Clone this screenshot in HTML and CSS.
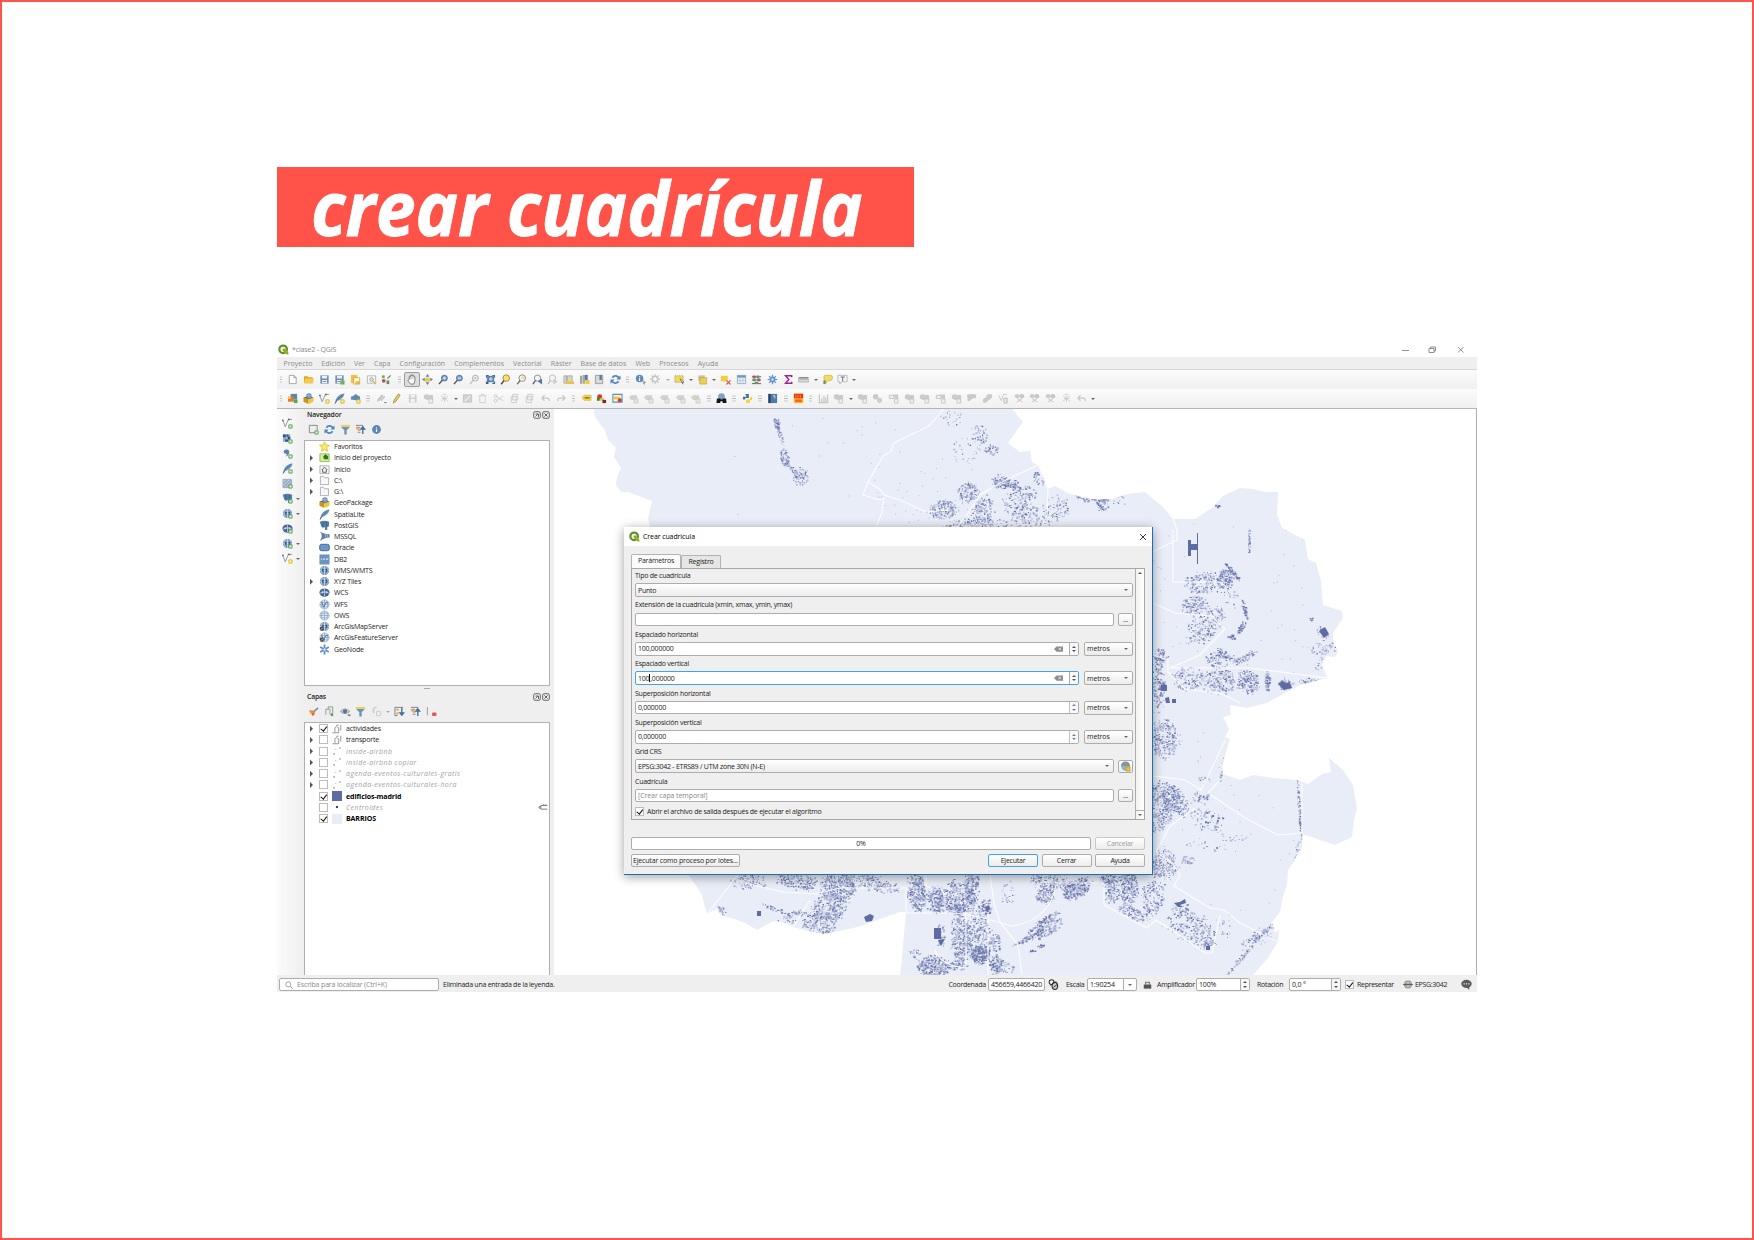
FILE: index.html
```html
<!DOCTYPE html>
<html lang="es">
<head>
<meta charset="utf-8">
<title>crear cuadrícula</title>
<link rel="stylesheet" href="styles.css">
</head>
<body>
<svg class="defs" aria-hidden="true"><defs>
<symbol id="qgis" viewBox="0 0 12 12"><circle cx="5.6" cy="5.8" r="4.1" fill="none" stroke="#589632" stroke-width="2.5"/><path d="M5.5 5.5h2.4L11.4 9.6v1.8H9.5L5.5 7.8z" fill="#93b023"/><path d="M5 5h2.6v1H6v1.6H5z" fill="#ee7913"/></symbol>
<symbol id="new" viewBox="0 0 12 12"><path d="M2.5 1.5h5l2.5 2.5v6.5h-7.5zM7.5 1.5V4H10" fill="#fff" stroke="#8a8a8a" stroke-width=".8"/></symbol>
<symbol id="open" viewBox="0 0 12 12"><path d="M1 2.5h4l1 1h4.5v6.500H1z" fill="#e0a32c"/><path d="M1 10l1.500-5H12l-1.200 5z" fill="#f6ca51"/></symbol>
<symbol id="save" viewBox="0 0 12 12"><path d="M1.500 1.500h9v9h-9z" fill="#6d8cad"/><path d="M3.200 1.800h5.600v3H3.200zM3.200 6.500h5.600v3.500H3.200z" fill="#eef1f4"/><path d="M4 8.200h4" stroke="#7b8896"/></symbol>
<symbol id="saveas" viewBox="0 0 12 12"><use href="#save"/><path d="M7 7h4.500v4.500H7z" fill="#6fae6d"/></symbol>
<symbol id="layout" viewBox="0 0 12 12"><path d="M1 1h7v9H1z" fill="#f0c33c"/><path d="M4 4h6.500v7H4z" fill="#fff8dc" stroke="#b89a4a" stroke-width=".7"/><path d="M6 8h5v3H6z" fill="#f3b62b"/></symbol>
<symbol id="layoutm" viewBox="0 0 12 12"><path d="M1.500 2h9v8h-9z" fill="#fafafa" stroke="#a5a5a5" stroke-width=".8"/><circle cx="6" cy="6" r="2" fill="#d6e3ef" stroke="#888" stroke-width=".7"/><path d="M7.500 7.500l3.500 3.500" stroke="#e7b53a" stroke-width="1.300"/></symbol>
<symbol id="style" viewBox="0 0 12 12"><path d="M1 1.500h3v3H1z" fill="#76a95b"/><path d="M6.500 4.500L10 1l1 1-3.500 3.500z" fill="#777"/><circle cx="3" cy="7.500" r="2" fill="#c0504d"/><path d="M6 7h3v4H6z" fill="#68915b"/></symbol>
<symbol id="pan" viewBox="0 0 12 12"><path d="M3.500 6V3h1.300V1.500h1.300V1h1.300v1h1.300v1.200h1v4.300L8.500 11H5L2 7.500l.5-1z" fill="#fff" stroke="#555" stroke-width=".8"/><path d="M4.800 3v3M6.200 2v4M7.500 2.500V6" stroke="#888" stroke-width=".5"/></symbol>
<symbol id="pansel" viewBox="0 0 12 12"><path d="M3.500 4h5v4.500h-5z" fill="#f5c93d"/><path d="M6 0l2 3H4zM6 12L4 9h4zM0 6l3-2v4zM12 6L9 8V4z" fill="#5a7fa8"/></symbol>
<symbol id="zin" viewBox="0 0 12 12"><circle cx="7" cy="4.500" r="3.200" fill="#78a2cf" stroke="#53749a" stroke-width="1"/><path d="M4.700 6.800L1 11" stroke="#555" stroke-width="1.500"/><path d="M5.300 4.500h3.400M7 2.900v3.200" stroke="#fff" stroke-width=".8"/></symbol>
<symbol id="zout" viewBox="0 0 12 12"><circle cx="7" cy="4.500" r="3.200" fill="#78a2cf" stroke="#53749a" stroke-width="1"/><path d="M4.700 6.800L1 11" stroke="#555" stroke-width="1.500"/><path d="M5.300 4.500h3.400" stroke="#fff" stroke-width=".9"/></symbol>
<symbol id="znat" viewBox="0 0 12 12"><circle cx="7" cy="4.500" r="3.200" fill="#eee" stroke="#aaa" stroke-width="1"/><path d="M4.700 6.800L1 11" stroke="#bbb" stroke-width="1.300"/><path d="M6 3.500h2v2H6z" fill="#bbb"/></symbol>
<symbol id="zfull" viewBox="0 0 12 12"><path d="M1 1h3.500L1 4.500zM11 1v3.500L7.500 1zM1 11V7.500L4.500 11zM11 11H7.500L11 7.500z" fill="#3f6c9c"/><path d="M2 2h8v7H2z" fill="#5c8abd"/><circle cx="6.300" cy="5.500" r="2.500" fill="#b4cde6" stroke="#557" stroke-width=".6"/><path d="M4 8l-2.500 3" stroke="#444"/></symbol>
<symbol id="zsel" viewBox="0 0 12 12"><circle cx="6.800" cy="4.500" r="3.600" fill="#f7df77" stroke="#a08a3a" stroke-width="1"/><path d="M4.300 7.200L1.300 11.200" stroke="#444" stroke-width="1.500"/></symbol>
<symbol id="zlay" viewBox="0 0 12 12"><circle cx="6.800" cy="4.500" r="3.600" fill="#f2f2ea" stroke="#888" stroke-width="1"/><path d="M4.300 7.200L1.300 11.200" stroke="#555" stroke-width="1.300"/><path d="M6 3h3v2H6z" fill="#f3d266"/></symbol>
<symbol id="zlast" viewBox="0 0 12 12"><circle cx="6" cy="4.500" r="3.400" fill="#f5f5f5" stroke="#888"/><path d="M3.800 7L1 11" stroke="#555" stroke-width="1.300"/><path d="M11 5v6.500L6.500 8.300z" fill="#4b7bb0"/></symbol>
<symbol id="znext" viewBox="0 0 12 12"><circle cx="6" cy="4.500" r="3.400" fill="#f5f5f5" stroke="#bbb"/><path d="M3.800 7L1 11" stroke="#bbb" stroke-width="1.300"/><path d="M7 5v6.500l4.500-3.300z" fill="#ccc"/></symbol>
<symbol id="mapa" viewBox="0 0 12 12"><path d="M1 2h3v8H1zM4.500 2H10v8H4.500z" fill="#d9d6c9" stroke="#8e8b7a" stroke-width=".6"/><path d="M3 8h9v3H3z" fill="#edc241"/></symbol>
<symbol id="book" viewBox="0 0 12 12"><path d="M1 2h2.500v8.500H1zM4 1h2.500v9.500H4z" fill="#a8a79f"/><path d="M6.500 1h3v6h-3z" fill="#4d7eb4"/><path d="M7 6.500h4.500V11H7z" fill="#f2c743"/></symbol>
<symbol id="book2" viewBox="0 0 12 12"><path d="M1.500 1.500h8v9h-8z" fill="#dcdad0" stroke="#8b8b88" stroke-width=".8"/><path d="M6 1h2.500v5.500H6z" fill="#4d7eb4"/></symbol>
<symbol id="refresh" viewBox="0 0 12 12"><path d="M10 5A4.200 4.200 0 0 0 2.500 4M2 7a4.200 4.200 0 0 0 7.500 1" fill="none" stroke="#4d86c0" stroke-width="1.900"/><path d="M11.500 1.500V6H7zM.5 10.500V6H5z" fill="#4d86c0"/></symbol>
<symbol id="ident" viewBox="0 0 12 12"><circle cx="5" cy="5" r="4.100" fill="#5e8fc4"/><path d="M5 4.500v3M5 2.500v1" stroke="#fff" stroke-width="1.200"/><path d="M7 6l4.500 3-2 .3.800 2z" fill="#fff" stroke="#444" stroke-width=".5"/></symbol>
<symbol id="gear" viewBox="0 0 12 12"><circle cx="5.500" cy="5.500" r="3" fill="none" stroke="#c5c5c5" stroke-width="1.600"/><path d="M5.500 0v2.500M5.500 8.500V11M0 5.500h2.500M8.500 5.500H11M1.600 1.600l1.800 1.800M7.600 7.600l1.800 1.800M9.400 1.600L7.600 3.400M3.400 7.600L1.600 9.400" stroke="#c9c9c9" stroke-width="1.300"/></symbol>
<symbol id="select" viewBox="0 0 12 12"><path d="M1 2h9v7H1z" fill="#f7dc52" stroke="#777" stroke-width=".7" stroke-dasharray="1.300 .8"/><path d="M6.500 5l4.500 4-2 .1.700 2z" fill="#fff" stroke="#444" stroke-width=".6"/></symbol>
<symbol id="selval" viewBox="0 0 12 12"><path d="M1.500 1.500h7v6h-7z" fill="#c7c49f"/><path d="M3 4h7.500v7H3z" fill="#efcf4b" stroke="#a0956a" stroke-width=".6"/></symbol>
<symbol id="desel" viewBox="0 0 12 12"><path d="M1 2h7.500v6H1z" fill="#f3cf3e"/><path d="M7 7h4.500v4.500H7z" fill="#fff"/><path d="M7 7l4.500 4.500M11.500 7L7 11.500" stroke="#d65353" stroke-width="1.300"/></symbol>
<symbol id="table" viewBox="0 0 12 12"><path d="M1.500 1.500h9v9h-9z" fill="#eaf0f6" stroke="#7f9cba" stroke-width=".8"/><path d="M1.500 1.500h9v2.500h-9z" fill="#6f98c4"/><path d="M4.500 4v6.500M7.500 4v6.500M1.500 7h9" stroke="#9cb3ca" stroke-width=".6"/></symbol>
<symbol id="abac" viewBox="0 0 12 12"><path d="M1 3h10M1 6.500h10M1 10.500h10" stroke="#555"/><path d="M2 1.500h3v3H2zM7 5h3v3H7z" fill="#c0504d"/><path d="M6 1.500h3v3H6zM2 5h3v3H2zM4 8.500h4v2H4z" fill="#5d9b76"/></symbol>
<symbol id="cog" viewBox="0 0 12 12"><circle cx="6" cy="6" r="3.200" fill="#5d94cf"/><path d="M6 .8v10.400M.8 6h10.400M2.300 2.300l7.400 7.400M9.700 2.300L2.300 9.700" stroke="#5d94cf" stroke-width="1.300"/><circle cx="6" cy="6" r="1.300" fill="#dbe7f4"/></symbol>
<symbol id="sum" viewBox="0 0 12 12"><path d="M9.500 3.500V1.800H2.800L6.300 6l-3.500 4.200h6.700V8.500" fill="none" stroke="#9b2393" stroke-width="1.600"/></symbol>
<symbol id="ruler" viewBox="0 0 12 12"><path d="M.5 3.500h11v1.500H.5z" fill="#777"/><path d="M.5 6h11v2.800H.5z" fill="#d8d8d8" stroke="#999" stroke-width=".6"/></symbol>
<symbol id="tip" viewBox="0 0 12 12"><path d="M3.500 1.500h6q2 0 2 2.500t-2 3H7L4 10V7Q2 7 2 4t1.500-2.500z" fill="#f5db67" stroke="#c9a93c" stroke-width=".7"/><path d="M1.500 7h2.500V11H1.500z" fill="#6b9550"/></symbol>
<symbol id="text" viewBox="0 0 12 12"><path d="M1 1.500h10v7H5L3 11V8.500H1z" fill="#f4f4f4" stroke="#aaa" stroke-width=".8"/><path d="M4 3.300h4.500M6.200 3.300V8" stroke="#667" stroke-width="1"/></symbol>
<symbol id="dsm" viewBox="0 0 12 12"><path d="M4 1h7v6H4z" fill="#5983b1"/><path d="M1 4h6.500v5.500H1z" fill="#d77e3c"/><path d="M1 3.500h3v3H1z" fill="#f5c843"/><path d="M7.500 7h4v4h-4z" fill="#5ca45a"/></symbol>
<symbol id="gpkg" viewBox="0 0 12 12"><path d="M.5 5l5.500 2v5L.5 9.500z" fill="#c9961a"/><path d="M11.500 5L6 7v5l5.500-2.500z" fill="#f3c63a"/><path d="M.5 5L6 3l5.500 2L6 7z" fill="#7d6a30"/><circle cx="6.500" cy="3.300" r="2.900" fill="#5f8dbd"/><path d="M4 3h5M6.500.8v5" stroke="#bfd5ec" stroke-width=".6"/></symbol>
<symbol id="vec" viewBox="0 0 12 12"><path d="M.8 2.500L3.500 9.500 7 1.500H11" fill="none" stroke="#7b8a9c" stroke-width=".9"/><circle cx="1" cy="2.500" r="1" fill="#667"/><circle cx="7.500" cy="1.500" r="1" fill="#667"/></symbol>
<symbol id="vecg" viewBox="0 0 12 12"><use href="#vec"/><path d="M7.500 7.500h3.500V11H7.500z" fill="#dfeedd" stroke="#56a052"/></symbol>
<symbol id="vecy" viewBox="0 0 12 12"><use href="#vec"/><path d="M7.500 7.500h3.500V11H7.500z" fill="#fff3ae" stroke="#ddb321"/></symbol>
<symbol id="vecd" viewBox="0 0 12 12"><path d="M.8 2.500L3.500 8.500 6 1.500H10" fill="none" stroke="#c4c4c4" stroke-width=".9"/><path d="M6.500 5.500h3.500V11H6.500z" fill="#e8e8e4" stroke="#bbb"/></symbol>
<symbol id="feather" viewBox="0 0 12 12"><path d="M1 11.500C1.500 6 5 1 11.500.5 11 4.500 7 8 3.500 8.500L1.800 11.500z" fill="#6e94bd"/><path d="M1 11.500Q4 5 9 2.500" stroke="#3e5e82" stroke-width=".7" fill="none"/></symbol>
<symbol id="feathg" viewBox="0 0 12 12"><use href="#feather"/><path d="M7.500 7.500h3.500V11H7.500z" fill="#dfeedd" stroke="#56a052"/></symbol>
<symbol id="feathy" viewBox="0 0 12 12"><use href="#feather"/><path d="M7.500 7.500h3.500V11H7.500z" fill="#fff3ae" stroke="#ddb321"/></symbol>
<symbol id="virt" viewBox="0 0 12 12"><path d="M1 4l3-1 2-2 3 2 2 1v4H6L1 7z" fill="#5f88b5"/><path d="M7.500 7.500h3.500V11H7.500z" fill="#fff3ae" stroke="#ddb321"/></symbol>
<symbol id="rast" viewBox="0 0 12 12"><path d="M1 1.500h8v8H1z" fill="#8eafd3"/><path d="M1 1.500h3v3H1zM6.500 4h2.500v3H6.500zM3.500 7h3v2.500h-3zM5 1.500h2V4H5z" fill="#2d527d"/><path d="M7.500 7.500h3.500V11H7.500z" fill="#dfeedd" stroke="#56a052"/></symbol>
<symbol id="comma" viewBox="0 0 12 12"><path d="M2 5.500A3 3 0 1 1 8 4C8 7 6 8.500 4 9.500 5.500 7.500 5 7 5 6.500z" fill="#5a82b0"/><path d="M7.500 7.500h3.500V11H7.500z" fill="#dfeedd" stroke="#56a052"/></symbol>
<symbol id="mesh" viewBox="0 0 12 12"><path d="M1 1.500h9.500v9H1z" fill="#b9c9da" stroke="#8299b1" stroke-width=".7"/><path d="M2 9.500L9.500 2.500M2 6l4-4M5 10l5-5" stroke="#637f9e" stroke-width=".8"/><path d="M7.500 7.500h3.500V11H7.500z" fill="#dfeedd" stroke="#56a052"/></symbol>
<symbol id="eleph" viewBox="0 0 12 12"><path d="M.8 2Q6-.5 11 2v4.500L9 8v3H6.500V8L4 8.500 2.500 7z" fill="#557da8"/><path d="M4.500 2v5M8 2.500v4" stroke="#2f5379" stroke-width=".7"/></symbol>
<symbol id="elephg" viewBox="0 0 12 12"><use href="#eleph"/><path d="M7.500 7.500h3.500V11H7.500z" fill="#dfeedd" stroke="#56a052"/></symbol>
<symbol id="globe" viewBox="0 0 12 12"><circle cx="6" cy="6" r="5" fill="#6f93ba"/><path d="M3.500 2.500Q1.500 6 3.500 9.500M6 1v10M8.500 2.500q2 3.500 0 7M1 6h10M2 3.500h8" stroke="#cfdeed" stroke-width=".8" fill="none"/><path d="M3 3.500l2.500 1L4.500 8 3 6.500zM7 4l2-.5.500 3.500-2 1z" fill="#3c5e86"/></symbol>
<symbol id="globeg" viewBox="0 0 12 12"><use href="#globe"/><path d="M7.500 7.500h3.500V11H7.500z" fill="#dfeedd" stroke="#56a052"/></symbol>
<symbol id="dglobe" viewBox="0 0 12 12"><ellipse cx="6" cy="6" rx="5.500" ry="4.500" fill="#43658e"/><path d="M1 7q5-3.500 10 0M6 2v8" stroke="#c5d5e6" fill="none" stroke-width=".9"/><circle cx="3.700" cy="5.800" r="1.200" fill="#c8d8e9"/><circle cx="8.300" cy="5.800" r="1.200" fill="#c8d8e9"/></symbol>
<symbol id="dglobeg" viewBox="0 0 12 12"><use href="#dglobe"/><path d="M7.500 7.500h3.500V11H7.500z" fill="#dfeedd" stroke="#56a052"/></symbol>
<symbol id="lglobe" viewBox="0 0 12 12"><circle cx="6" cy="6" r="5" fill="#e6eef6" stroke="#8aa9ca" stroke-width=".8"/><path d="M3.500 2.500Q1.500 6 3.500 9.500M6 1v10M8.500 2.500q2 3.500 0 7M1 6h10M2 3.500h8M2 8.500h8" stroke="#7c9dc1" stroke-width=".7" fill="none"/></symbol>
<symbol id="wfs" viewBox="0 0 12 12"><use href="#lglobe"/><path d="M3 3l2 6 2.500-5H10" fill="none" stroke="#51708f"/></symbol>
<symbol id="ags" viewBox="0 0 12 12"><use href="#globe"/><circle cx="3" cy="8.500" r="2.300" fill="#444"/><path d="M2 9.500l2-2" stroke="#fff" stroke-width=".8"/></symbol>
<symbol id="agsf" viewBox="0 0 12 12"><use href="#wfs"/><circle cx="3" cy="8.500" r="2.300" fill="#444"/><path d="M2 9.500l2-2" stroke="#fff" stroke-width=".8"/></symbol>
<symbol id="pen" viewBox="0 0 12 12"><path d="M2.500 11L3.500 7.500 8 1l2 1.300L5.500 9z" fill="#f0cf44" stroke="#8a7a32" stroke-width=".7"/></symbol>
<symbol id="peng" viewBox="0 0 12 12"><path d="M1 9.500L2 6.500 6.500 1.500l1.800 1.500L4 8.500zM5 8L9 3l1 1-4 5z" fill="#c4c2be"/><path d="M9 10.500h2.500" stroke="#666"/></symbol>
<symbol id="saveg" viewBox="0 0 12 12"><path d="M2 1.500h8.500v9H2z" fill="#d0d0d0"/><path d="M4 2h4.500v2.800H4zM4 6.500h4.500v3.500H4z" fill="#f4f4f4"/></symbol>
<symbol id="polyg" viewBox="0 0 12 12"><path d="M1 2.500Q4 0 7 2.500q3-1.500 4 .5v4L7 6.500 5 8 1 6z" fill="#cbcbc8"/><path d="M6.500 6.500h4V11h-4z" fill="#efeee9" stroke="#c2bdb0" stroke-width=".8"/></symbol>
<symbol id="polyh" viewBox="0 0 12 12"><path d="M1.500 2.500h5v3.500h-5z" fill="#f0f0ee" stroke="#c4c4c0"/><path d="M5 1.500h6v5H8z" fill="#cbcbc8"/><path d="M7 6.500h4V11H7z" fill="#efeee9" stroke="#c9bfa8" stroke-width=".8"/></symbol>
<symbol id="blobs" viewBox="0 0 12 12"><circle cx="4" cy="4" r="3" fill="#cacac7"/><circle cx="8.200" cy="8" r="2.800" fill="#cfceca"/></symbol>
<symbol id="blob2" viewBox="0 0 12 12"><ellipse cx="3.500" cy="3.500" rx="2.700" ry="2.300" fill="#cdcdca"/><ellipse cx="8.500" cy="3.500" rx="2.700" ry="2.300" fill="#c6c6c3"/><path d="M3 10l6-4M9 10L3.500 6" stroke="#cbb9b9" stroke-width="1"/></symbol>
<symbol id="bean" viewBox="0 0 12 12"><path d="M1 9Q.5 6.500 4 5q1-4 4.500-4T11 4Q10.500 7 7 8 5 11 3 11T1 9z" fill="#cbcbc8"/></symbol>
<symbol id="flag" viewBox="0 0 12 12"><path d="M1 2q5-2 10 0v3.500Q6 5.500 4.500 8.500L2 9z" fill="#c9c9c6"/></symbol>
<symbol id="starg" viewBox="0 0 12 12"><path d="M6 3v7M2 3l8 6M10 3L2 9M3 6h6M4 1.500l4 0" stroke="#cfcfcf" stroke-width="1"/></symbol>
<symbol id="noteg" viewBox="0 0 12 12"><path d="M1.500 2h9v8h-9z" fill="#d4d4cf" stroke="#bcbcb8" stroke-width=".8"/><path d="M3 9l6-6" stroke="#fff"/></symbol>
<symbol id="trash" viewBox="0 0 12 12"><path d="M1.500 3h9M4.500 3V1.500h3V3M3 3v7.500h6V3" fill="none" stroke="#cfcfcf"/></symbol>
<symbol id="cut" viewBox="0 0 12 12"><path d="M11 3.500L4 8M11 8.500L4 4" stroke="#ccc"/><circle cx="2.700" cy="3.500" r="1.500" fill="none" stroke="#ccc"/><circle cx="2.700" cy="8.500" r="1.500" fill="none" stroke="#ccc"/></symbol>
<symbol id="copy" viewBox="0 0 12 12"><path d="M4 1.500h5.500v6H4zM2.500 4H8v6.500H2.500z" fill="#f3f3f3" stroke="#ccc"/></symbol>
<symbol id="undo" viewBox="0 0 12 12"><path d="M2 5.500h6q2.500 0 2 3.500M5 2.500L2 5.500l3 3" fill="none" stroke="#c8c8c8" stroke-width="1.300"/></symbol>
<symbol id="redo" viewBox="0 0 12 12"><path d="M10 5.500H4q-2.500 0-2 3.500M7 2.500l3 3-3 3" fill="none" stroke="#c8c8c8" stroke-width="1.300"/></symbol>
<symbol id="label" viewBox="0 0 12 12"><path d="M1 5l2.500-2.500H11v5.500H3.500z" fill="#f7d83f" stroke="#c6a52c" stroke-width=".6"/><path d="M4 5.300h5.500" stroke="#554" stroke-width="1.200"/></symbol>
<symbol id="labc" viewBox="0 0 12 12"><circle cx="4" cy="4" r="2.700" fill="#d33"/><path d="M1 5h3v3.500H1z" fill="#2c8b3c"/><path d="M4.500 5.500h4v3h-4z" fill="#e9bf2b"/><path d="M7 7.500h4v3.500H7z" fill="#7c2b2b"/></symbol>
<symbol id="labb" viewBox="0 0 12 12"><path d="M1 1.500h10v8.500H1z" fill="#fff5cc" stroke="#4f8fd6" stroke-width="1.200"/><path d="M2 4h7v3H2z" fill="#efc93a"/><circle cx="8.500" cy="8" r="2.200" fill="#cf3a3a"/></symbol>
<symbol id="labg" viewBox="0 0 12 12"><path d="M1 4.500l2.500-2H10v5H3.500z" fill="#d2d1cb"/><path d="M6.500 6.500H11V11H6.500z" fill="#e6e5e1" stroke="#c4c2bc" stroke-width=".7"/></symbol>
<symbol id="bino" viewBox="0 0 12 12"><circle cx="6" cy="4" r="3.700" fill="#7fa3c9"/><path d="M1 6h4v1h2V6h4l.5 5H7.500L7 9H5l-.5 2H.5z" fill="#151515"/></symbol>
<symbol id="py" viewBox="0 0 12 12"><path d="M3.500 1h4v4.500H4L3 7H1V4h4" fill="#3d75a8"/><path d="M8.500 11h-4V7h4l1-3H11v4H8.500z" fill="#f8cf3c"/></symbol>
<symbol id="bookb" viewBox="0 0 12 12"><path d="M1.500 1h9.500v10H1.500z" fill="#4d7cab"/><path d="M1.500 1H4v10H1.500z" fill="#27425f"/><path d="M6.500 3h2v3" fill="none" stroke="#dce8f4"/></symbol>
<symbol id="osm" viewBox="0 0 12 12"><path d="M.8.800h10.400v10.400H.8z" fill="#ffc726"/><path d="M1 .8h10v5H1z" fill="#ef2f1c"/><path d="M3 2v3M5.500 2v3M8 2v3" stroke="#ffc21e" stroke-width=".8"/><path d="M2 7h8v3H2z" fill="#f4672a"/></symbol>
<symbol id="histo" viewBox="0 0 12 12"><path d="M1.500 1.500v9h9v-9M4 10V6M6.500 10V3M8.500 10V5" fill="none" stroke="#c6c6c2" stroke-width="1.300"/></symbol>
<symbol id="addl" viewBox="0 0 12 12"><path d="M8 9.500H1.500v-8H10V7" fill="none" stroke="#777" stroke-width=".9"/><path d="M7.500 7.500h3.500V11H7.500z" fill="#dfeedd" stroke="#56a052"/></symbol>
<symbol id="filter" viewBox="0 0 12 12"><path d="M1 3h10L7.300 6.800V11.500H4.700V6.800z" fill="#6c93bf"/><path d="M1 1h10v1.800H1z" fill="#f1cf41"/></symbol>
<symbol id="coll" viewBox="0 0 12 12"><path d="M1 1.500h8M1.500 4h4M3 6.500h3M3 9h3" stroke="#7b7b7b"/><path d="M1.500 3h2.500v3H1.500z" fill="#f09a39"/><path d="M8.500 11V5M6.500 5.500L8.500 3l2 2.500z" stroke="#446f9e" stroke-width="1.500" fill="#446f9e"/></symbol>
<symbol id="expa" viewBox="0 0 12 12"><path d="M1 1.500h9M1 1.500v9h3" stroke="#7b7b7b" fill="none"/><path d="M2.500 3h2.500v2H2.500zM2.500 7h2.500v2H2.500z" fill="#f09a39"/><path d="M8.500 2v6M6.500 7.500L8.500 10l2-2.500z" stroke="#446f9e" stroke-width="1.500" fill="#446f9e"/></symbol>
<symbol id="info" viewBox="0 0 12 12"><circle cx="6" cy="6" r="4.800" fill="#5b87b8"/><path d="M6 5.300v3.400M6 3.200v1" stroke="#fff" stroke-width="1.300"/></symbol>
<symbol id="star" viewBox="0 0 12 12"><path d="M6 .8l1.600 3.500 3.800.4-2.900 2.600.9 3.900L6 9.200l-3.400 2 .9-3.900L.6 4.700l3.800-.4z" fill="#fbe867" stroke="#d3b62c" stroke-width=".8"/></symbol>
<symbol id="homep" viewBox="0 0 12 12"><path d="M1 2h10v8.500H1z" fill="#d7f09b" stroke="#86a832" stroke-width=".8"/><path d="M4.500 5L7 2.500l3 2V8H5.500z" fill="#267a23"/></symbol>
<symbol id="home" viewBox="0 0 12 12"><path d="M1 2h10v8.500H1z" fill="#f5f5f5" stroke="#999" stroke-width=".8"/><path d="M3 6.500L6 3.500l3 3M4 6v3h4V6" fill="none" stroke="#444" stroke-width=".9"/></symbol>
<symbol id="folder" viewBox="0 0 12 12"><path d="M1.500 10.500v-9H5l1 1.500h4.500v7.500z" fill="#f7f7f7" stroke="#999" stroke-width=".8"/></symbol>
<symbol id="mssql" viewBox="0 0 12 12"><path d="M1 .5Q4 3 11.500 3.500V7Q6 7 1 11q2-3 2-5.500T1 .5z" fill="#5b7fa8"/><path d="M7 3v4M9 3.500V7" stroke="#dbe5f0" stroke-width=".6"/></symbol>
<symbol id="orac" viewBox="0 0 12 12"><rect x=".8" y="2.500" width="10.400" height="7" rx="2" fill="#6d96c4" stroke="#3c6494"/></symbol>
<symbol id="db2" viewBox="0 0 12 12"><path d="M.5.500h11v11H.5z" fill="#6a93c0"/><path d="M2 5.500h1.500M4.500 5.500h2M7.500 5.500H10" stroke="#dce8f4" stroke-width="1.300"/></symbol>
<symbol id="snow" viewBox="0 0 12 12"><path d="M6 .5v11M1.300 3.300l9.400 5.400M10.700 3.300L1.300 8.700" stroke="#5f8dc0" stroke-width="2"/><circle cx="6" cy="6" r="1.300" fill="#dce8f4"/></symbol>
<symbol id="brush" viewBox="0 0 12 12"><path d="M11 2L6 6.500" stroke="#7b91a8" stroke-width="1.800"/><path d="M1 4.500L5.500 5 8 8 5 10.500z" fill="#e8833a"/><path d="M1 5l3 3-1 2z" fill="#f3c33e"/><path d="M5 8l2 1-2 2z" fill="#d6453f"/></symbol>
<symbol id="addgrp" viewBox="0 0 12 12"><path d="M2 9.500V3.500h4.500v6M4.500 3V1h5v7" fill="none" stroke="#888" stroke-width=".9"/><path d="M7.500 8h2.500v3H7.500z" fill="#56a052"/></symbol>
<symbol id="eye" viewBox="0 0 12 12"><path d="M.5 6Q5.500.5 10.500 6 5.500 10.500.5 6z" fill="#ddd" stroke="#777" stroke-width=".8"/><circle cx="5.500" cy="5.800" r="2.300" fill="#4d79a8"/><path d="M8.500 9h3v2h-3z" fill="#888"/></symbol>
<symbol id="eps" viewBox="0 0 12 12"><path d="M6 1.500Q1.500 1.500 3 5 1 6 3.500 7.500" fill="none" stroke="#c8c8c8" stroke-width="1.500"/><path d="M6 6h4.500v4.500H6z" fill="#eee" stroke="#ccc"/></symbol>
<symbol id="rem" viewBox="0 0 12 12"><path d="M1 1h1v9H1z" fill="#999"/><rect x="6.500" y="7" width="5" height="4" rx="1.500" fill="#e65757"/></symbol>
<symbol id="grp" viewBox="0 0 12 12"><path d="M.5 10.500H8V4M3.500 9.500V4.500L5.500 3 7 4.500M5 1.500h3M10.500 1v7" fill="none" stroke="#777" stroke-width=".9"/></symbol>
<symbol id="pts" viewBox="0 0 12 12"><circle cx="2.500" cy="9.500" r="1" fill="#999"/><circle cx="4.500" cy="4" r=".8" fill="#bbb"/><circle cx="9.500" cy="2.500" r="1" fill="#999"/></symbol>
<symbol id="lupa" viewBox="0 0 12 12"><circle cx="5" cy="5" r="3.800" fill="none" stroke="#777"/><path d="M8 8l3.500 3.500" stroke="#777" stroke-width="1.200"/></symbol>
<symbol id="mouse" viewBox="0 0 12 12"><circle cx="4" cy="3.500" r="2.700" fill="none" stroke="#333" stroke-width="1.200"/><ellipse cx="7.500" cy="7.500" rx="3" ry="3.800" fill="#ccc" stroke="#333" stroke-width="1.200"/><path d="M2 7l7-4M6 9l4-3" stroke="#333"/></symbol>
<symbol id="lock" viewBox="0 0 12 12"><path d="M1 6h10v5.500H1z" fill="#555"/><path d="M3.500 6V3h5V6" fill="none" stroke="#777" stroke-width="1.600"/></symbol>
<symbol id="crs" viewBox="0 0 12 12"><circle cx="6" cy="6" r="4.800" fill="#8e8e8e"/><path d="M2 4h8M2 8h8M6 1v10" stroke="#e5e5e5" stroke-width=".7"/><path d="M0 5.500h12v1H0z" fill="#555"/></symbol>
<symbol id="bubble" viewBox="0 0 12 12"><ellipse cx="6" cy="5.300" rx="5.700" ry="4.600" fill="#5b5b5b"/><path d="M6 9l3 3V7z" fill="#5b5b5b"/><path d="M2.800 5.300h1.300M5.400 5.300h1.300M8 5.300h1.300" stroke="#eee" stroke-width="1.300"/></symbol>
<symbol id="crsy" viewBox="0 0 12 12"><circle cx="6" cy="5.500" r="4.800" fill="#8db4cf"/><path d="M1 5.500h10A5 5 0 0 0 1 5.500z" fill="#8d9499"/><path d="M6.500 6.500H11V11H6.500z" fill="#e9c33a" stroke="#b8962a" stroke-width=".7"/></symbol>
<symbol id="clear" viewBox="0 0 12 8"><path d="M0 4l3.500-3.500H12v7H3.500z" fill="#8c8c8c"/><path d="M6 2.300l3.400 3.400M9.400 2.300L6 5.700" stroke="#fff" stroke-width=".9"/></symbol>
<symbol id="mem" viewBox="0 0 14 10"><path d="M13 3H4v5h9M4 4.500H1.500v2H4M8 3V1M11 3V1" fill="none" stroke="#777" stroke-width="1.300"/></symbol>
<symbol id="float" viewBox="0 0 8 8"><rect x=".7" y=".7" width="6.600" height="6.600" rx="1.500" fill="none" stroke="#666" stroke-width="1"/><path d="M2.500 3l3 0v3M2.500 5.500L5 3" stroke="#666" fill="none"/></symbol>
<symbol id="close" viewBox="0 0 8 8"><rect x=".7" y=".7" width="6.600" height="6.600" rx="1.500" fill="none" stroke="#666" stroke-width="1"/><path d="M2.300 2.300l3.400 3.400M5.700 2.300L2.300 5.700" stroke="#666"/></symbol>
</defs></svg>

<main class="slide">
  <h1 class="banner"><span>crear cuadrícula</span></h1>

  <section class="app">
    <header class="titlebar">
      <svg class="ic"><use href="#qgis"/></svg><span>*clase2 - QGIS</span>
      <svg class="wbtn" viewBox="0 0 62 8"><path d="M0 4.500h7M27 2.500h5v4h-5zM28.500 2.500V1h5v4h-1.500M56 1l5.500 5.500M61.500 1L56 6.500" fill="none" stroke="#777" stroke-width=".8"/></svg>
    </header>
    <nav class="menu"><span>Proyecto</span><span>Edición</span><span>Ver</span><span>Capa</span><span>Configuración</span><span>Complementos</span><span>Vectorial</span><span>Ráster</span><span>Base de datos</span><span>Web</span><span>Procesos</span><span>Ayuda</span></nav>
    <div class="toolbar" data-icons="g8 new open save saveas layout layoutm style g9 pan! pansel zin zout znat zfull zsel zlay zlast znext mapa book book2 refresh g9 ident gear a0 select a selval a desel table abac cog sum ruler a tip text a"></div>
    <div class="toolbar two" data-icons="g8 dsm gpkg vecy feathy virt g10 peng pen saveg polyg starg a noteg trash cut copy copy undo redo g9 label labc labb labg labg labg labg labg g10 bino g10 py g10 bookb g10 osm g9 histo polyg a polyg blobs polyh polyg polyg polyh polyg flag bean vecd blob2 blob2 blob2 starg undo a"></div>

    <div class="work">
      <aside class="side">
        <div class="vtools">
          <div><svg class="ic"><use href="#vecg"/></svg></div>
          <div><svg class="ic"><use href="#rast"/></svg></div>
          <div><svg class="ic"><use href="#comma"/></svg></div>
          <div><svg class="ic"><use href="#feathg"/></svg></div>
          <div><svg class="ic"><use href="#mesh"/></svg></div>
          <div><svg class="ic"><use href="#elephg"/></svg><i class="dn"></i></div>
          <div><svg class="ic"><use href="#globeg"/></svg><i class="dn"></i></div>
          <div><svg class="ic"><use href="#dglobeg"/></svg></div>
          <div><svg class="ic"><use href="#globeg"/></svg><i class="dn"></i></div>
          <div><svg class="ic"><use href="#vecy"/></svg><i class="dn"></i></div>
        </div>
        <div class="panels">
          <div class="phead"><b>Navegador</b><svg><use href="#float"/></svg><svg><use href="#close"/></svg></div>
          <div class="ptools" data-icons="addl refresh filter coll info"></div>
          <ul class="tree nav">
            <li><i></i><svg class="ic"><use href="#star"/></svg>Favoritos</li>
            <li><i class="rt"></i><svg class="ic"><use href="#homep"/></svg>Inicio del proyecto</li>
            <li><i class="rt"></i><svg class="ic"><use href="#home"/></svg>Inicio</li>
            <li><i class="rt"></i><svg class="ic"><use href="#folder"/></svg>C:\</li>
            <li><i class="rt"></i><svg class="ic"><use href="#folder"/></svg>G:\</li>
            <li><i></i><svg class="ic"><use href="#gpkg"/></svg>GeoPackage</li>
            <li><i></i><svg class="ic"><use href="#feather"/></svg>SpatiaLite</li>
            <li><i></i><svg class="ic"><use href="#eleph"/></svg>PostGIS</li>
            <li><i></i><svg class="ic"><use href="#mssql"/></svg>MSSQL</li>
            <li><i></i><svg class="ic"><use href="#orac"/></svg>Oracle</li>
            <li><i></i><svg class="ic"><use href="#db2"/></svg>DB2</li>
            <li><i></i><svg class="ic"><use href="#globe"/></svg>WMS/WMTS</li>
            <li><i class="rt"></i><svg class="ic"><use href="#globe"/></svg>XYZ Tiles</li>
            <li><i></i><svg class="ic"><use href="#dglobe"/></svg>WCS</li>
            <li><i></i><svg class="ic"><use href="#wfs"/></svg>WFS</li>
            <li><i></i><svg class="ic"><use href="#lglobe"/></svg>OWS</li>
            <li><i></i><svg class="ic"><use href="#ags"/></svg>ArcGisMapServer</li>
            <li><i></i><svg class="ic"><use href="#agsf"/></svg>ArcGisFeatureServer</li>
            <li><i></i><svg class="ic"><use href="#snow"/></svg>GeoNode</li>
          </ul>
          <div class="split"></div>
          <div class="phead"><b>Capas</b><svg><use href="#float"/></svg><svg><use href="#close"/></svg></div>
          <div class="ptools" data-icons="brush addgrp eye filter eps a0 expa coll rem"></div>
          <ul class="tree layers">
            <li><i class="rt"></i><em class="cb on"></em><svg class="ic"><use href="#grp"/></svg>actividades</li>
            <li><i class="rt"></i><em class="cb"></em><svg class="ic"><use href="#grp"/></svg>transporte</li>
            <li class="off"><i class="rt"></i><em class="cb"></em><svg class="ic"><use href="#pts"/></svg>inside-airbnb</li>
            <li class="off"><i class="rt"></i><em class="cb"></em><svg class="ic"><use href="#pts"/></svg>inside-airbnb copiar</li>
            <li class="off"><i class="rt"></i><em class="cb"></em><svg class="ic"><use href="#pts"/></svg>agenda-eventos-culturales-gratis</li>
            <li class="off"><i class="rt"></i><em class="cb"></em><svg class="ic"><use href="#pts"/></svg>agenda-eventos-culturales-hora</li>
            <li class="bold"><i></i><em class="cb on"></em><span class="sw dark"></span>edificios-madrid</li>
            <li class="off"><i></i><em class="cb"></em><span class="sw dot"></span>Centroides<svg class="mem"><use href="#mem"/></svg></li>
            <li class="bold"><i></i><em class="cb on"></em><span class="sw pale"></span>BARRIOS</li>
          </ul>
        </div>
      </aside>

      <div class="map">
        <svg id="map" viewBox="554 409 922 566">
          <defs><clipPath id="city"><use href="#outline"/></clipPath></defs>
          <path id="outline" fill="#e9edf7" d="M594 409L595 417 600 424 605 430 608 440 616 448 614 457 621 468 617 477 616 485 621 492 628 492 652 501 648 518 650 527 655 700 688 874 701 893 704 903 707 914 716 909 722 915 737 920 745 923 757 930 766 925 774 921 786 923 793 927 808 931 824 934 858 927 880 919 900 912 906 912 902 957 900 975H1253L1267 959 1278 942 1279 929 1275 933 1272 922 1280 912 1283 896 1287 885 1288 870 1302 848 1303 834 1320 840 1335 845 1352 837 1354 820 1357 809 1353 785 1343 770 1329 758 1331 772 1322 774 1308 784 1297 780 1273 778 1253 775 1240 780 1223 774 1222 766 1230 739 1225 737 1229 729 1223 717 1231 715 1230 705 1247 708 1267 703 1287 692 1300 685 1327 678 1322 664 1326 656 1335 657 1338 652 1333 640 1333 633 1343 618 1342 611 1323 605 1321 581 1316 563 1308 559 1305 540 1282 528 1277 515 1278 492 1264 492 1253 489 1240 488 1223 496 1213 507 1195 519 1173 519 1163 507 1145 492 1127 494 1112 499 1090 499 1070 494 1055 486 1047 489 1043 477 1038 465 1032 462 1030 451 1020 452 1008 443 1023 422 1012 409Z"/>
          <path id="specks" clip-path="url(#city)" fill="#b3bbd8"/>
          <path id="buildings" clip-path="url(#city)" fill="#6c78ad"/>
          <path class="blocks" d="M1188 540h3v4h6v-3h1v13h-1v-4h-6v6h-3zM1197 533h1v31h-1zM1319 631l6-4 4 7-5 4zM1278 684l5-3 2 2 5 0 2 5-8 2zM1161 685h6v6h-6zM1165 698l4-1 1 6h-4zM1172 699h4v4h-4zM934 928h7v11h-7zM938 940l7-1-4 7zM864 917l6-3 4 2-2 5-6 1zM757 911h4v5h-4zM1206 946l4-1v5h-4zM1174 903l6-1 5-3 1 4-6 2 3 2-5 0zM985 907l4-2 1 4-3 3z"/>
          <g class="roads">
            <path d="M944 409L929 426 894 443 890 453 884 455 868 482 863 495 880 500 884 498 882 512 876 528M868 482L880 489 884 495 900 500 926 512 950 510M1038 465L1000 483 980 495 966 516 955 530M1048 490L1047 515 1040 530M1173 519L1177 530 1177 540 1150 553M1173 530L1173 582 1220 582 1228 588M1153 603L1175 613 1212 616 1225 629 1200 655 1170 668H1250L1327 678M1153 655L1168 660 1168 672 1185 689 1222 694 1240 703M1153 776L1185 780 1201 790 1225 741M1208 793L1223 777M1208 793L1245 818 1278 835 1303 833M1195 808L1170 826 1156 852 1173 864 1180 875 1174 886 1210 908 1224 910 1240 923 1278 942M1055 883H1104V905L1147 928 1156 920 1175 932 1205 953H1212L1220 915M707 914L738 875M745 883L783 892 815 894 840 888H906V913H955L980 917 1012 926Q1050 920 1056 885M926 874V887H940L945 895V912M990 875L994 903 1000 922 1018 945 1022 975M793 927L810 900M966 912V968M988 912V975M935 950Q940 965 965 968M1302 784L1302 834"/>
          </g>
        </svg>

        <section class="dialog">
          <header><svg class="ic"><use href="#qgis"/></svg><span>Crear cuadrícula</span><svg class="x" viewBox="0 0 8 8"><path d="M1 1l6 6M7 1L1 7" stroke="#222" stroke-width=".9"/></svg></header>
          <div class="tabs"><span class="tab cur">Parámetros</span><span class="tab">Registro</span></div>
          <div class="pane">
            <div class="form">
              <label>Tipo de cuadrícula</label>
              <div class="row"><span class="combo grow">Punto<i class="dn"></i></span></div>
              <label>Extensión de la cuadrícula (xmin, xmax, ymin, ymax)</label>
              <div class="row"><span class="input grow"></span><span class="btn mini">...</span></div>
              <label>Espaciado horizontal</label>
              <div class="row"><span class="input grow">100,000000<svg class="clr"><use href="#clear"/></svg><i class="spin"></i></span><span class="combo unit">metros<i class="dn"></i></span></div>
              <label>Espaciado vertical</label>
              <div class="row"><span class="input grow focus">100<u></u>,000000<svg class="clr"><use href="#clear"/></svg><i class="spin"></i></span><span class="combo unit">metros<i class="dn"></i></span></div>
              <label>Superposición horizontal</label>
              <div class="row"><span class="input grow">0,000000<i class="spin low"></i></span><span class="combo unit">metros<i class="dn"></i></span></div>
              <label>Superposición vertical</label>
              <div class="row"><span class="input grow">0,000000<i class="spin low"></i></span><span class="combo unit">metros<i class="dn"></i></span></div>
              <label>Grid CRS</label>
              <div class="row"><span class="combo grow">EPSG:3042 - ETRS89 / UTM zone 30N (N-E)<i class="dn"></i></span><span class="btn mini"><svg class="ic"><use href="#crsy"/></svg></span></div>
              <label>Cuadrícula</label>
              <div class="row"><span class="input grow ph">[Crear capa temporal]</span><span class="btn mini">...</span></div>
              <div class="check"><em class="cb on"></em>Abrir el archivo de salida después de ejecutar el algoritmo</div>
            </div>
            <div class="scroll"><i class="up"></i><b><i class="dn"></i></b></div>
          </div>
          <div class="foot">
            <span class="progress">0%</span><span class="btn dis">Cancelar</span>
          </div>
          <div class="foot last">
            <span class="btn batch">Ejecutar como proceso por lotes...</span><span class="btn go">Ejecutar</span><span class="btn">Cerrar</span><span class="btn">Ayuda</span>
          </div>
        </section>
      </div>
    </div>

    <footer class="status">
      <span class="sfield locate"><svg class="ic"><use href="#lupa"/></svg>Escriba para localizar (Ctrl+K)</span>
      <span class="msg">Eliminada una entrada de la leyenda.</span>
      <span class="lab l1">Coordenada</span><span class="sfield coord">456659,4466420</span>
      <svg class="ic m1"><use href="#mouse"/></svg>
      <span class="lab l2">Escala</span><span class="sfield scale">1:90254<i class="drop"><i class="dn"></i></i></span>
      <svg class="ic m2"><use href="#lock"/></svg>
      <span class="lab l3">Amplificador</span><span class="sfield amp">100%<i class="spin"></i></span>
      <span class="lab l4">Rotación</span><span class="sfield rot">0,0 °<i class="spin"></i></span>
      <em class="cb on"></em><span class="lab l5">Representar</span>
      <svg class="ic m3"><use href="#crs"/></svg><span class="lab l6">EPSG:3042</span><svg class="ic m4"><use href="#bubble"/></svg>
    </footer>
  </section>
</main>
<script src="app.js"></script>
</body>
</html>
```

FILE: styles.css
```css
* { box-sizing: border-box; }
body { margin: 0; background: #fff; font-family: "Open Sans", "Noto Sans", sans-serif; font-size: 7px; letter-spacing: -.15px; color: #1c1c22; }
.defs { position: absolute; width: 0; height: 0; }
i, em { font-style: normal; }
.slide { width: 1754px; height: 1240px; border: 2px solid #ff544b; padding: 165px 0 0 275px; overflow: hidden; }
.banner { margin: 0; width: 637px; height: 80px; background: #ff534a; color: #fff; padding-left: 34px; font: italic 700 75px/80px "Open Sans", "Noto Sans", sans-serif; letter-spacing: 0; white-space: nowrap; }
.banner span { display: inline-block; transform-origin: 0 50%; transform: scaleX(.954); -webkit-text-stroke: .8px #fff; }
.app { width: 1200px; height: 650px; margin-top: 95px; display: flex; flex-direction: column; background: #efefef; white-space: nowrap; }
.ic { width: 11px; height: 11px; flex: none; display: block; }
.titlebar { height: 15px; background: #fff; display: flex; align-items: center; gap: 3px; padding: 0 13px 0 1px; color: #8a8a8a; }
.wbtn { width: 62px; height: 8px; margin-left: auto; }
.menu { height: 13px; display: flex; align-items: center; gap: 9px; padding-left: 6.500px; border-bottom: 1px solid #d6d6d6; color: #8d8d8d; letter-spacing: .01px; }
.toolbar { height: 19px; display: flex; align-items: center; background: linear-gradient(#fbfbfb, #f0f0f0); }
.toolbar.two { height: 20px; border-bottom: 1px solid #b4b4b4; }
.cell { width: 15.700px; height: 15px; flex: none; display: flex; align-items: center; justify-content: center; }
.cell.on { border: 1px solid #9c9c9c; border-radius: 2px; background: #dedede; }
.grip { height: 9px; flex: none; background: radial-gradient(circle, #bbb .6px, transparent .8px) center / 2px 2.500px; background-clip: content-box; padding: 0 3px; }
.arr { width: 7.500px; flex: none; display: flex; justify-content: center; }
.dn { width: 0; height: 0; border: 2.300px solid transparent; border-top: 2.600px solid #666; border-bottom: 0; flex: none; }
.arr.dim .dn { border-top-color: #aaa; }
.work { flex: 1; min-height: 0; display: flex; }
.side { width: 277px; display: flex; }
.vtools { width: 27px; padding-top: 7px; background: linear-gradient(90deg, #fbfbfb, #efefef); }
.vtools div { height: 15px; display: flex; align-items: center; gap: 3px; padding-left: 4.500px; }
.panels { width: 246px; display: flex; flex-direction: column; }
.phead { height: 13px; display: flex; align-items: center; padding: 0 0 2px 3px; gap: 1px; }
.phead b { font-weight: 600; flex: 1; font-size: 6.800px; }
.phead svg { width: 8px; height: 8px; }
.ptools { height: 18px; display: flex; align-items: center; padding: 0 0 3px 2px; }
.tree { list-style: none; margin: 0; padding: 0; background: #fff; border: 1px solid #b0b0b0; overflow: hidden; }
.tree li { height: 11.250px; display: flex; align-items: center; }
.tree li > i { width: 14px; flex: none; position: relative; left: 5px; }
.tree .rt { height: 6px; background: linear-gradient(#555, #555) 0 0 / 3px 6px no-repeat; clip-path: polygon(0 0, 3px 3px, 0 6px); }
.tree .ic { margin-right: 4px; }
.nav { height: 246px; }
.split { height: 5px; background: radial-gradient(circle, #aaa .6px, transparent .8px) center / 2px 3px; background-clip: content-box; padding: 1px 120px; }
.layers { flex: 1; border-bottom: 0; }
.cb { width: 9px; height: 9px; flex: none; border: 1px solid #bcbcbc; background: #fff; position: relative; display: block; }
.cb.on::after { content: ""; position: absolute; left: 2px; top: 0; width: 2.500px; height: 4.500px; border: solid #111; border-width: 0 1.300px 1.300px 0; transform: rotate(38deg); }
.layers .ic { width: 10px; height: 10px; margin: 0 4px 0 4px; }
.sw { width: 10px; height: 10px; flex: none; margin: 0 4px 0 4px; }
.sw.dark { background: #5f6ca4; }
.sw.pale { background: #e9edf7; }
.sw.dot { background: radial-gradient(circle, #3c4674 1.300px, transparent 1.600px); }
.layers .bold { font-weight: 700; color: #000; letter-spacing: -.08px; }
.layers .off { color: #a3a3a3; font-style: italic; letter-spacing: .42px; }
.mem { width: 10px; height: 8px; margin-left: auto; margin-right: 1px; }
.map { flex: 1; position: relative; background: #fff; border-right: 1px solid #b0b0b0; }
#map { width: 922px; height: 566px; display: block; }
.roads path { fill: none; stroke: #fff; stroke-width: 1.100; opacity: .9; }
.blocks { fill: #5f6ca4; }

.dialog { position: absolute; left: 70px; top: 118px; width: 529px; height: 348px; background: #efefef; border-right: 1px solid #1570b4; border-bottom: 1px solid #1570b4; box-shadow: 0 2px 10px rgba(0, 0, 0, .38); padding: 0 7px; letter-spacing: -.24px; }
.dialog header { height: 19px; margin: 0 -7px; padding: 0 5px; display: flex; align-items: center; gap: 3px; background: #fff; color: #000; letter-spacing: -.1px; }
.dialog .x { width: 8px; height: 8px; margin-left: auto; }
.tabs { margin-top: 8px; display: flex; align-items: flex-end; letter-spacing: -.2px; }
.tab { height: 13px; width: 40px; line-height: 12px; text-align: center; border: 1px solid #b3b3b3; border-bottom: 0; background: #e6e6e6; border-radius: 2px 2px 0 0; }
.tab.cur { height: 14px; width: 50px; background: #fbfbfb; }
.pane { height: 252px; border: 1px solid #a8a8a8; display: flex; width: 514px; }
.form { flex: 1; padding: 0 2px 0 3px; margin-top: -1px; display: grid; grid-template-rows: repeat(16, 14.700px) 16px; }
.form label { line-height: 15px; }
.row { display: flex; align-items: center; gap: 4px; }
.grow { flex: 1; }
.input, .combo, .btn, .progress { height: 13.500px; border: 1px solid #adadad; border-radius: 2px; background: #fff; display: flex; align-items: center; padding-left: 2px; }
.combo, .btn { background: linear-gradient(#fff, #ececec); }
.combo { height: 14px; }
.combo .dn { margin-left: auto; margin-right: 4.500px; }
.unit { width: 49px; margin-left: 1px; letter-spacing: -.1px; }
.mini { width: 15px; justify-content: center; padding: 0; }
.input.focus { border-color: #3fa4ee; }
.input u { width: 1px; height: 8px; background: #000; }
.input.ph { color: #888; letter-spacing: -.1px; }
.clr { width: 9px; height: 6px; margin-left: auto; margin-right: 6px; }
.spin { width: 9px; align-self: stretch; border-left: 1px solid #adadad; background: #f8f8f8; margin-left: auto; display: flex; flex-direction: column; align-items: center; justify-content: center; gap: 2.500px; }
.clr + .spin { margin-left: 0; }
.spin::before, .spin::after { content: ""; border: 2.500px solid transparent; border-top: 0; border-bottom: 2.700px solid #555; }
.spin::after { border-bottom: 0; border-top: 2.700px solid #555; }
.low { opacity: .75; }
.check { display: flex; align-items: center; gap: 3px; padding-top: 1px; }
.scroll { width: 9px; border-left: 1px solid #adadad; background: linear-gradient(90deg, #f2f2f2, #fff); display: flex; flex-direction: column; align-items: center; justify-content: space-between; padding-top: 3px; }
.scroll b { width: 100%; height: 9px; border-top: 1px solid #adadad; display: flex; align-items: center; justify-content: center; }
.up { border: 2.300px solid transparent; border-top: 0; border-bottom: 2.600px solid #555; }
.foot { display: flex; gap: 4px; margin-top: 16.500px; width: 514px; }
.foot.last { margin-top: 4px; gap: 3.500px; }
.foot .btn { width: 50px; height: 13px; justify-content: center; padding: 0; }
.progress { flex: 1; height: 13px; justify-content: center; padding: 0; }
.foot .btn.batch { width: 109px; margin-right: auto; letter-spacing: -.17px; }
.foot .go { border-color: #3fa4ee; }
.foot .dis { color: #a0a0a0; border-color: #c8c8c8; }

.status { height: 17px; display: flex; align-items: center; padding: 2px 0 0 2px; }
.sfield { height: 13px; border: 1px solid #adadad; border-radius: 2px; background: #fff; display: flex; align-items: center; padding-left: 2px; }
.locate { width: 160px; color: #8a8a8a; gap: 4px; padding-left: 5px; }
.locate .ic { width: 8px; height: 8px; }
.msg { width: 509px; padding-left: 4px; letter-spacing: -.25px; }
.lab { letter-spacing: -.3px; }
.l1 { width: 40px; padding-left: .5px; }
.coord { width: 57px; letter-spacing: -.2px; }
.m1 { margin: 0 7px 0 3px; }
.l2 { width: 21px; }
.scale { width: 50px; }
.drop { width: 13px; align-self: stretch; border-left: 1px solid #adadad; margin-left: auto; display: flex; align-items: center; justify-content: center; }
.m2 { margin: 0 5px 0 6px; width: 9px; }
.l3 { width: 39px; }
.amp { width: 54px; }
.l4 { width: 39px; padding-left: 7px; }
.rot { width: 52px; margin-right: 4px; }
.l5 { width: 47px; padding-left: 3px; }
.m3 { margin: 0 2px; width: 10px; }
.l6 { width: 46px; }
```

FILE: app.js
```js
// Toolbars: "gN" is a grip N px wide, "a" a drop-down arrow, "name!" a pressed button.
document.querySelectorAll('[data-icons]').forEach(bar => {
  bar.innerHTML = bar.dataset.icons.split(' ').map(t => {
    if (/^g\d+$/.test(t)) return `<span class="grip" style="width:${t.slice(1)}px"></span>`;
    if (t === 'a' || t === 'a0') return `<span class="arr${t === 'a0' ? ' dim' : ''}"><i class="dn"></i></span>`;
    const on = t.endsWith('!');
    const id = t.replace('!', '');
    return `<span class="cell${on ? ' on' : ''}"><svg class="ic"><use href="#${id}"/></svg></span>`;
  }).join('');
});

// Building footprints: [cx, cy, rx, ry, rotation in degrees, count, footprint size]
let seed = 7;
const rnd = () => (seed = (seed * 16807) % 2147483647) / 2147483647;
const clusters = [
  [776, 423, 3, 5, -15, 40, 1.5], [780, 436, 2, 10, -15, 35, 1.2], [784, 457, 4, 8, -10, 50, 1.5], [791, 468, 2, 12, -40, 40, 1.3], [800, 476, 7, 8, 0, 70, 1.4],
  [979, 433, 8, 8, 0, 45, 1.5], [991, 449, 6, 5, 0, 40, 1.6], [965, 450, 14, 14, 0, 30, 1.2], [950, 418, 12, 9, 0, 20, 1.2],
  [942, 509, 14, 9, 0, 170, 1.4], [968, 492, 9, 10, 30, 110, 1.5], [982, 511, 10, 14, 20, 140, 1.4], [1000, 482, 9, 7, 20, 75, 1.7],
  [1020, 501, 16, 16, 0, 150, 1.7], [1012, 483, 9, 5, 20, 50, 1.5], [1037, 478, 4, 8, -40, 25, 1.6], [975, 523, 30, 6, 0, 120, 1.4], [1030, 520, 18, 8, 0, 80, 1.5],
  [1056, 507, 12, 12, 0, 90, 1.3], [1090, 496, 17, 5, 10, 130, 1.4], [1102, 504, 6, 6, 0, 60, 1.4], [1120, 498, 8, 6, 0, 14, 1.2],
  [1204, 582, 20, 10, -10, 150, 1.5], [1226, 578, 8, 10, 30, 130, 1.7], [1194, 605, 12, 9, 0, 150, 1.3], [1205, 625, 22, 12, -40, 220, 1.3], [1232, 571, 1.5, 11, -40, 50, 1.9], [1244, 608, 1.5, 10, -15, 45, 1.9], [1241, 627, 2, 7, 30, 35, 1.9], [1231, 637, 4, 2, 0, 25, 1.9], [1228, 656, 3, 14, -55, 50, 1.9], [1245, 657, 3, 11, 60, 50, 1.6], [1230, 598, 9, 9, 0, 20, 1.2],
  [1216, 660, 10, 8, 0, 60, 1.5], [1187, 678, 14, 11, 0, 110, 1.6], [1219, 680, 16, 12, 0, 170, 1.7], [1248, 681, 10, 12, 0, 180, 1.5], [1267, 681, 2.5, 9, 0, 70, 1.7], [1310, 681, 10, 3, 0, 40, 1.6], [1285, 684, 7, 5, 0, 50, 1.7],
  [1249, 540, 1, 13, 0, 40, 1.3], [1217, 506, 4, 1.5, 0, 12, 1.6], [1297, 527, 4, 5, -30, 10, 1.3], [1311, 618, 2, 2, 0, 8, 1.6],
  [1322, 632, 5, 8, -30, 25, 1.7], [1322, 648, 12, 6, 0, 45, 1.5], [1318, 662, 5, 9, 0, 14, 1.2],
  [1158, 680, 6, 28, 0, 150, 1.6], [1164, 739, 13, 18, 0, 260, 1.4], [1161, 655, 6, 7, 0, 60, 1.4],
  [1163, 797, 18, 14, 0, 300, 1.5], [1176, 803, 10, 16, -50, 140, 1.3], [1160, 820, 14, 9, -40, 130, 1.3], [1208, 820, 18, 10, 15, 60, 1.8], [1200, 797, 9, 6, 0, 40, 1.7], [1205, 845, 20, 4, 10, 14, 1.8], [1188, 859, 6, 5, 0, 25, 1.7], [1233, 838, 12, 6, 0, 18, 1.3],
  [1299, 808, 1.2, 25, -4, 75, 1.4], [1296, 852, 2, 18, 15, 22, 1.2], [1222, 770, 2, 12, 10, 20, 1.4], [1204, 777, 6, 6, 0, 12, 1.3],
  [1163, 865, 14, 13, 20, 260, 1.2], [1076, 888, 15, 8, -30, 220, 1.9], [1108, 880, 8, 7, 0, 90, 1.7], [1048, 880, 18, 10, 10, 170, 1.4], [1045, 895, 8, 8, 0, 110, 1.4], [1128, 886, 9, 18, 0, 260, 1.5], [1112, 893, 7, 9, 0, 80, 1.4], [1152, 897, 11, 17, 15, 150, 1.6], [1132, 913, 15, 6, 25, 110, 1.4],
  [1180, 907, 8, 6, 0, 25, 1.9], [1192, 928, 24, 14, 25, 200, 1.5], [1205, 942, 8, 6, 0, 40, 1.6], [1243, 955, 28, 2, -50, 80, 1.3], [1262, 932, 20, 3, -30, 60, 1.3], [1255, 940, 20, 8, -40, 40, 1.2], [1225, 925, 8, 12, 0, 15, 1.3],
  [748, 880, 16, 8, 0, 110, 1.3], [795, 879, 22, 9, 15, 260, 1.3], [838, 886, 16, 14, 0, 330, 1.4], [830, 905, 17, 14, -20, 320, 1.3], [820, 923, 16, 11, 10, 200, 1.4], [860, 880, 25, 8, 10, 200, 1.3], [887, 887, 14, 5, 0, 60, 1.3], [797, 913, 9, 3, -10, 35, 1.7], [778, 910, 16, 2, 20, 40, 1.6], [722, 911, 3, 6, -30, 25, 1.3], [786, 919, 8, 5, 0, 20, 1.2],
  [917, 894, 9, 15, 0, 230, 1.5], [937, 896, 9, 10, 0, 170, 1.6], [958, 896, 12, 16, 0, 270, 1.6], [972, 886, 7, 16, 0, 190, 1.6], [950, 908, 22, 5, 0, 130, 1.6], [985, 906, 6, 8, 0, 60, 1.8], [915, 879, 8, 5, 0, 45, 1.5],
  [960, 938, 9, 24, 0, 330, 1.4], [977, 936, 12, 23, 0, 300, 1.3], [980, 954, 9, 9, 0, 250, 1.7], [933, 966, 15, 10, 0, 330, 1.5], [957, 965, 10, 4, 0, 60, 1.7], [996, 964, 6, 9, 0, 80, 1.8], [995, 943, 5, 9, 0, 40, 1.8], [1005, 968, 9, 6, 0, 35, 1.4], [940, 935, 4, 12, 0, 40, 1.8], [914, 952, 5, 6, 0, 20, 1.4],
  [1008, 893, 8, 12, 0, 30, 1.3], [1028, 937, 17, 2, -28, 60, 2], [1045, 927, 17, 8, -28, 140, 1.9], [1048, 917, 14, 2, -28, 40, 1.6], [1036, 948, 8, 2, -28, 25, 1.8]
];
let dark = '', pale = '';
const rect = (x, y, w, h) => `M${x.toFixed(1)} ${y.toFixed(1)}h${w.toFixed(1)}v${h.toFixed(1)}h-${w.toFixed(1)}z`;
for (const [cx, cy, rx, ry, deg, n, size] of clusters) {
  const a = deg * Math.PI / 180, c = Math.cos(a), s = Math.sin(a);
  for (let i = 0; i < n; i++) {
    const r = Math.sqrt(rnd()) * (.85 + rnd() * .4), t = rnd() * 2 * Math.PI;
    const u = r * rx * Math.cos(t), v = r * ry * Math.sin(t);
    const x = cx + u * c - v * s, y = cy + u * s + v * c;
    if (rnd() < .5) dark += rect(x, y, .4 + rnd() * size, .4 + rnd() * size * .85);
    else pale += rect(x, y, .8 + rnd() * size, .8 + rnd() * size);
  }
}
// Isolated farm buildings scattered over the outer districts
for (let i = 0; i < 110; i++) pale += rect(1150 + rnd() * 160, 520 + rnd() * 420, 1, 1);
for (let i = 0; i < 25; i++) pale += rect(730 + rnd() * 270, 412 + rnd() * 110, 1, 1);
for (let i = 0; i < 35; i++) pale += rect(870 + rnd() * 110, 450 + rnd() * 70, 1, 1);
document.getElementById('buildings').setAttribute('d', dark);
document.getElementById('specks').setAttribute('d', pale);
```
